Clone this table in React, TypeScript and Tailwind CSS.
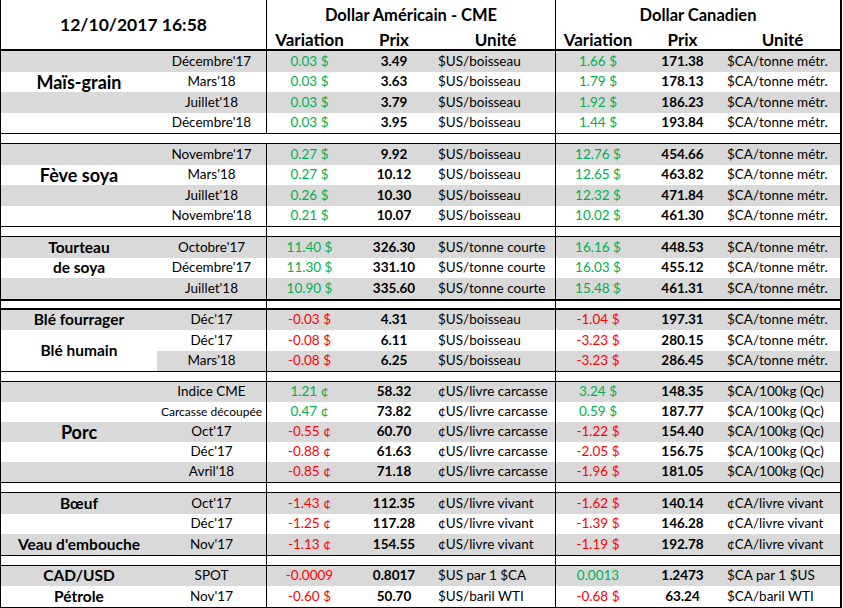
import React from 'react';

type Row = [string, string, string, string, string, string, string];
type Label = { text: string; span?: number; big?: boolean };

interface SectionProps {
  rows: Row[];
  labels: (Label | null)[];
  rowH: string;
  smallMonth?: number[];
}

const GRAY = 'bg-[#d9d9d9]';

function varColor(v: string) {
  return v.startsWith('-') ? 'text-[#ff0000]' : 'text-[#00b050]';
}

function Section({ rows, labels, rowH, smallMonth = [] }: SectionProps) {
  const aCells: React.ReactNode[] = [];
  let i = 0;
  while (i < rows.length) {
    const lab = labels[i];
    const span = lab?.span ?? 1;
    const bg = i % 2 === 0 ? GRAY : 'bg-white';
    aCells.push(
      <div
        key={i}
        className={`flex items-center justify-center whitespace-nowrap ${bg} ${
          lab?.big ? 'text-[18px] font-bold' : 'text-[15.5px] font-bold'
        }`}
        style={{ flexGrow: span, flexBasis: 0 }}>
        {lab?.text}
      </div>
    );
    i += span;
  }

  return (
    <div className="flex">
      <div className="flex w-[156px] flex-col">{aCells}</div>
      <div className="flex flex-col">
        {rows.map((r, idx) =>
        <div
          key={idx}
          className={`flex items-center whitespace-nowrap ${rowH} ${idx % 2 === 0 ? GRAY : 'bg-white'}`}>
            <div
            className={`flex h-full w-[110px] items-center justify-center border-r border-black ${
            smallMonth.includes(idx) ? 'text-[12px]' : ''}`
            }>
              {r[0]}
            </div>
            <div className={`w-[85px] text-center ${varColor(r[1])}`}>{r[1]}</div>
            <div className="w-[84px] text-center font-bold">{r[2]}</div>
            <div className="flex h-full w-[120px] items-center border-r border-black pl-[2px]">
              {r[3]}
            </div>
            <div className={`w-[84px] text-center ${varColor(r[4])}`}>{r[4]}</div>
            <div className="w-[85px] text-center font-bold">{r[5]}</div>
            <div className="w-[115px] pl-[2px]">{r[6]}</div>
          </div>
        )}
      </div>
    </div>);

}

function Gap({ thick = false, noFirst = false }: { thick?: boolean; noFirst?: boolean }) {
  return (
    <div
      className={`flex border-black ${
      thick ? 'h-[11px] border-y-2' : 'h-[11px] border-y'}`
      }>
      <div className="w-[156px]" />
      <div className={`w-[110px] ${noFirst ? '' : 'border-r border-black'}`} />
      <div className="w-[289px] border-r border-black" />
      <div className="w-[284px]" />
    </div>);

}

const US_B = '$US/boisseau';
const CA_T = '$CA/tonne métr.';
const US_C = '$US/tonne courte';
const US_L = '¢US/livre carcasse';
const CA_K = '$CA/100kg (Qc)';
const US_V = '¢US/livre vivant';
const CA_V = '¢CA/livre vivant';

export default function App() {
  return (
    <div
      className="w-[842px] border-l border-r-2 border-black bg-white text-[13.5px] leading-none text-black"
      style={{ fontFamily: 'Lato, "Open Sans", sans-serif' }}>

      <div className="flex h-[51px] border-b-2 border-black">
        <div className="flex w-[266px] items-center justify-center border-r border-black text-[17.5px] font-bold">
          12/10/2017 16:58
        </div>
        <div className="flex flex-col font-bold">
          <div className="flex h-[29px] items-center text-[16.5px]">
            <div className="flex h-full w-[289px] items-center justify-center border-r border-black pt-[1px]">
              Dollar Américain - CME
            </div>
            <div className="flex h-full w-[284px] items-center justify-center pt-[1px]">
              Dollar Canadien
            </div>
          </div>
          <div className="flex h-[20px] items-center text-[17px]">
            <div className="w-[85px] text-center">Variation</div>
            <div className="w-[84px] text-center">Prix</div>
            <div className="flex h-full w-[120px] items-center justify-center border-r border-black">
              Unité
            </div>
            <div className="w-[84px] text-center">Variation</div>
            <div className="w-[85px] text-center">Prix</div>
            <div className="w-[115px] text-center">Unité</div>
          </div>
        </div>
      </div>

      <Section
        rowH="h-[20.5px]"
        labels={[null, { text: 'Maïs-grain', big: true }, null, null]}
        rows={[
        ["Décembre'17", '0.03 $', '3.49', US_B, '1.66 $', '171.38', CA_T],
        ["Mars'18", '0.03 $', '3.63', US_B, '1.79 $', '178.13', CA_T],
        ["Juillet'18", '0.03 $', '3.79', US_B, '1.92 $', '186.23', CA_T],
        ["Décembre'18", '0.03 $', '3.95', US_B, '1.44 $', '193.84', CA_T]]
        } />

      <Gap noFirst />

      <Section
        rowH="h-[20.5px]"
        labels={[null, { text: 'Fève soya', big: true }, null, null]}
        rows={[
        ["Novembre'17", '0.27 $', '9.92', US_B, '12.76 $', '454.66', CA_T],
        ["Mars'18", '0.27 $', '10.12', US_B, '12.65 $', '463.82', CA_T],
        ["Juillet'18", '0.26 $', '10.30', US_B, '12.32 $', '471.84', CA_T],
        ["Novembre'18", '0.21 $', '10.07', US_B, '10.02 $', '461.30', CA_T]]
        } />

      <Gap />

      <Section
        rowH="h-[20.5px]"
        labels={[{ text: 'Tourteau' }, { text: 'de soya' }, null]}
        rows={[
        ["Octobre'17", '11.40 $', '326.30', US_C, '16.16 $', '448.53', CA_T],
        ["Décembre'17", '11.30 $', '331.10', US_C, '16.03 $', '455.12', CA_T],
        ["Juillet'18", '10.90 $', '335.60', US_C, '15.48 $', '461.31', CA_T]]
        } />

      <Gap thick />

      <Section
        rowH="h-[20.5px]"
        labels={[{ text: 'Blé fourrager' }, { text: 'Blé humain', span: 2 }, null]}
        rows={[
        ["Déc'17", '-0.03 $', '4.31', US_B, '-1.04 $', '197.31', CA_T],
        ["Déc'17", '-0.08 $', '6.11', US_B, '-3.23 $', '280.15', CA_T],
        ["Mars'18", '-0.08 $', '6.25', US_B, '-3.23 $', '286.45', CA_T]]
        } />

      <Gap />

      <Section
        rowH="h-[20px]"
        smallMonth={[1]}
        labels={[null, null, { text: 'Porc', big: true }, null, null]}
        rows={[
        ['Indice CME', '1.21 ¢', '58.32', US_L, '3.24 $', '148.35', CA_K],
        ['Carcasse découpée', '0.47 ¢', '73.82', US_L, '0.59 $', '187.77', CA_K],
        ["Oct'17", '-0.55 ¢', '60.70', US_L, '-1.22 $', '154.40', CA_K],
        ["Déc'17", '-0.88 ¢', '61.63', US_L, '-2.05 $', '156.75', CA_K],
        ["Avril'18", '-0.85 ¢', '71.18', US_L, '-1.96 $', '181.05', CA_K]]
        } />

      <Gap />

      <Section
        rowH="h-[20.5px]"
        labels={[{ text: 'Bœuf' }, null, { text: "Veau d'embouche" }]}
        rows={[
        ["Oct'17", '-1.43 ¢', '112.35', US_V, '-1.62 $', '140.14', CA_V],
        ["Déc'17", '-1.25 ¢', '117.28', US_V, '-1.39 $', '146.28', CA_V],
        ["Nov'17", '-1.13 ¢', '154.55', US_V, '-1.19 $', '192.78', CA_V]]
        } />

      <Gap />

      <div className="border-b-2 border-black">
        <Section
          rowH="h-[20.5px]"
          labels={[{ text: 'CAD/USD' }, { text: 'Pétrole' }]}
          rows={[
          ['SPOT', '-0.0009', '0.8017', '$US par 1 $CA', '0.0013', '1.2473', '$CA par 1 $US'],
          ["Nov'17", '-0.60 $', '50.70', '$US/baril WTI', '-0.68 $', '63.24', '$CA/baril WTI']]
          } />
      </div>
    </div>);

}
